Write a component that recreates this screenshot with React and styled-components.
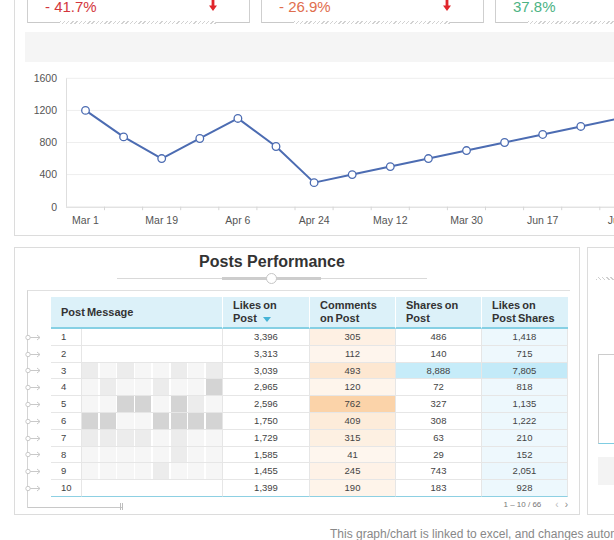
import React from 'react';
import styled, { createGlobalStyle } from 'styled-components';

const GlobalStyle = createGlobalStyle`
  html, body { margin: 0; padding: 0; overflow: hidden; background: #fff; }
  body { font-family: "Liberation Sans", Arial, sans-serif; color: #333; }
`;

const Page = styled.div`
  width: 720px;
  margin-top: -30px;
`;

/* ---------- top panel ---------- */
const TopPanel = styled.section`
  margin-left: 14px;
  border-left: 1px solid #dcdcdc;
  border-bottom: 1px solid #dcdcdc;
  border-right: 1px solid #dcdcdc;
`;

const CardsRow = styled.div`
  display: flex;
  gap: 11px;
  padding-left: 12px;
`;

const Card = styled.div`
  box-sizing: border-box;
  flex: 0 0 223px;
  height: 53px;
  border-left: 1px solid #cfcfcf;
  border-right: 1px solid #cfcfcf;
  display: flex;
  flex-direction: column;
  justify-content: flex-end;
`;

const ValueRow = styled.div`
  display: flex;
  align-items: center;
  justify-content: space-between;
  height: 18px;
  padding: 0 32px 0 17px;
  margin-bottom: 3px;
`;

const Value = styled.span`
  font-size: 15px;
  line-height: 18px;
  color: ${(p) => p.$color};
`;

const ArrowIcon = styled.svg`
  display: block;
  margin-bottom: 3px;
`;

const BottomRule = styled.div`
  display: flex;
  align-items: flex-end;
  height: 4px;
`;

const RuleSolid = styled.div`
  flex: 0 0 ${(p) => p.$w}px;
  height: 1px;
  background: #c9c9c9;
`;

const RuleHatch = styled.div`
  flex: 1;
  height: 3px;
  margin-bottom: -1px;
  background: repeating-linear-gradient(135deg, #d2d2d2 0 1px, transparent 1px 3px);
`;

const GreyBand = styled.div`
  margin: 9px 0 0 10px;
  height: 30px;
  background: #f5f5f5;
`;

const ChartSvg = styled.svg`
  display: block;
  text {
    font-family: "Liberation Sans", Arial, sans-serif;
    font-size: 10.5px;
    fill: #555;
  }
`;

/* ---------- lower row ---------- */
const LowerRow = styled.div`
  display: flex;
  gap: 7px;
  margin: 11px 0 0 14px;
`;

const PostsPanel = styled.section`
  box-sizing: border-box;
  flex: 0 0 566px;
  border: 1px solid #dcdcdc;
  padding: 4px 0 6px 0;
`;

const Title = styled.h2`
  margin: 0;
  padding-right: 50px;
  text-align: center;
  font-size: 16px;
  line-height: 20px;
  font-weight: bold;
  color: #333;
`;

const SliderBox = styled.div`
  height: 12px;
  display: flex;
  align-items: center;
  justify-content: center;
  padding-right: 50px;
`;

const Track = styled.div`
  position: relative;
  width: 310px;
  height: 1px;
  background: #d9d9d9;
`;

const Range = styled.div`
  position: absolute;
  left: 105px;
  top: -1px;
  width: 99px;
  height: 3px;
  background: #cdcdcd;
`;

const Handle = styled.div`
  position: absolute;
  left: 149px;
  top: -5px;
  box-sizing: border-box;
  width: 11px;
  height: 11px;
  border-radius: 50%;
  border: 1px solid #c6c6c6;
  background: #fff;
`;

const Frame = styled.div`
  box-sizing: border-box;
  width: 543px;
  margin: 6px 0 0 12px;
  border-top: 1px solid #e0e0e0;
  border-left: 1px solid #d4d4d4;
  padding: 6px 2px 0 0;
`;

const Table = styled.div`
  display: flex;
  flex-direction: column;
`;

const HeaderRow = styled.div`
  display: grid;
  grid-template-columns: 23px 172px 87px 86px 86px 86px;
  height: 32px;
`;

const HeadCell = styled.div`
  box-sizing: border-box;
  display: flex;
  align-items: center;
  padding-left: 10px;
  background: ${(p) => (p.$blank ? 'transparent' : '#dcf1f9')};
  border-bottom: ${(p) => (p.$blank ? 'none' : '2px solid #86d0e4')};
  border-right: ${(p) => (p.$blank || p.$last ? 'none' : '1px solid #fff')};
  font-size: 11px;
  line-height: 13px;
  font-weight: bold;
  word-spacing: -1px;
  color: #333;
`;

const SortArrow = styled.span`
  display: inline-block;
  margin-left: 6px;
  vertical-align: middle;
  border-left: 4px solid transparent;
  border-right: 4px solid transparent;
  border-top: 5px solid #45b3d6;
`;

const BodyRow = styled.div`
  display: grid;
  grid-template-columns: 23px 31px 141px 87px 86px 86px 86px;
  height: 16.8px;
`;

const IconCell = styled.div`
  display: flex;
  align-items: center;
  margin-left: -3px;
`;

const Cell = styled.div`
  box-sizing: border-box;
  border-bottom: 1px solid ${(p) => (p.$last ? '#8dd0e3' : '#e6e6e6')};
  border-right: 1px solid #e6e6e6;
  background: ${(p) => p.$bg || '#fff'};
  font-size: 9.5px;
  line-height: 15.8px;
  color: #444;
  text-align: ${(p) => (p.$left ? 'left' : 'center')};
  padding-left: ${(p) => (p.$left ? '10px' : '0')};
`;

const MsgCell = styled.div`
  box-sizing: border-box;
  border-bottom: 1px solid ${(p) => (p.$last ? '#8dd0e3' : '#e6e6e6')};
  border-right: 1px solid #e6e6e6;
  display: flex;
  gap: 1.6px;
`;

const shades = ['transparent', '#f6f6f6', '#ececec', '#d4d4d4'];

const Square = styled.div`
  flex: 1;
  background: ${(p) => shades[p.$level]};
`;

const TableFooter = styled.div`
  display: flex;
  align-items: flex-end;
  height: 11px;
`;

const ScrollStub = styled.div`
  box-sizing: border-box;
  width: 95px;
  height: 11px;
  border-bottom: 1px solid #c8c8c8;
  display: flex;
  justify-content: flex-end;
  align-items: flex-end;
`;

const Grip = styled.div`
  box-sizing: border-box;
  width: 3px;
  height: 7px;
  margin-bottom: -3px;
  border-left: 1px solid #bdbdbd;
  border-right: 1px solid #bdbdbd;
`;

const Pager = styled.div`
  margin-left: auto;
  display: flex;
  align-items: center;
  gap: 14px;
  font-size: 8px;
  line-height: 10px;
  color: #777;
  margin-bottom: -2px;
`;

const PagerArrows = styled.span`
  display: flex;
  gap: 6px;
  font-size: 10px;
  color: #bbb;
  & > span:last-child { color: #888; }
`;

const SidePanel = styled.section`
  box-sizing: border-box;
  flex: 0 0 80px;
  border: 1px solid #dcdcdc;
  padding: 29px 0 0 10px;
`;

const SideHatch = styled.div`
  margin-left: -2px;
  height: 3px;
  background: repeating-linear-gradient(45deg, #cfcfcf 0 1px, transparent 1px 3px);
`;

const SideBox = styled.div`
  margin-top: 74px;
  height: 90px;
  box-sizing: border-box;
  border: 1px solid #cccccc;
  border-bottom: 1px solid #7fcde2;
`;

const SideGrey = styled.div`
  margin-top: 13px;
  height: 28px;
  background: #f3f3f3;
`;

const Caption = styled.p`
  margin: 12px 0 0 330px;
  font-size: 12px;
  line-height: 14px;
  color: #888;
  white-space: nowrap;
`;

/* ---------- data ---------- */
const cards = [
  { value: '- 41.7%', color: '#d3363d', down: true },
  { value: '- 26.9%', color: '#df6e4e', down: true },
  { value: '37.8%', color: '#4cb384', down: false },
];

const series = [1200, 870, 600, 850, 1100, 750, 300, 400, 500, 600, 700, 800, 900, 1000, 1100];
const xLabels = ['Mar 1', 'Mar 19', 'Apr 6', 'Apr 24', 'May 12', 'Mar 30', 'Jun 17', 'Jul 5'];

const z = [0, 0, 0, 0, 0, 0, 0, 0];
const rows = [
  { n: 1, likes: 3396, comments: 305, shares: 486, ls: 1418, heat: z },
  { n: 2, likes: 3313, comments: 112, shares: 140, ls: 715, heat: z },
  { n: 3, likes: 3039, comments: 493, shares: 8888, ls: 7805, heat: [2, 1, 2, 1, 1, 2, 1, 2] },
  { n: 4, likes: 2965, comments: 120, shares: 72, ls: 818, heat: [1, 2, 1, 1, 2, 1, 1, 3] },
  { n: 5, likes: 2596, comments: 762, shares: 327, ls: 1135, heat: [1, 1, 3, 3, 1, 3, 2, 1] },
  { n: 6, likes: 1750, comments: 409, shares: 308, ls: 1222, heat: [3, 3, 1, 1, 3, 3, 3, 3] },
  { n: 7, likes: 1729, comments: 315, shares: 63, ls: 210, heat: [2, 2, 2, 2, 1, 2, 1, 1] },
  { n: 8, likes: 1585, comments: 41, shares: 29, ls: 152, heat: [1, 1, 1, 1, 1, 2, 1, 1] },
  { n: 9, likes: 1455, comments: 245, shares: 743, ls: 2051, heat: [1, 1, 1, 1, 2, 1, 1, 1] },
  { n: 10, likes: 1399, comments: 190, shares: 183, ls: 928, heat: z },
];

const fmt = (v) => v.toLocaleString('en-US');

const hex = (c) => [1, 3, 5].map((i) => parseInt(c.slice(i, i + 2), 16));
const mix = (a, b, t) => {
  const A = hex(a);
  const B = hex(b);
  return `rgb(${A.map((x, i) => Math.round(x + (B[i] - x) * t)).join(',')})`;
};
const heat = (v, max, from, to) => mix(from, to, Math.pow(v / max, 2));

/* ---------- pieces ---------- */
const DownArrow = () => (
  <ArrowIcon width="8" height="11" viewBox="0 0 8 11">
    <path d="M2.6 0h2.8v5.6H8L4 11 0 5.6h2.6z" fill="#e0262c" />
  </ArrowIcon>
);

const RowLink = () => (
  <svg width="17" height="7" viewBox="0 0 17 7">
    <circle cx="3" cy="3.5" r="2.2" fill="#fff" stroke="#c9c9c9" strokeWidth="1" />
    <line x1="5.2" y1="3.5" x2="15" y2="3.5" stroke="#c9c9c9" strokeWidth="1" />
    <polyline points="12,1 15,3.5 12,6" fill="none" stroke="#c9c9c9" strokeWidth="1" />
  </svg>
);

const OX = 15;
const OY = 62;
const xAt = (k) => 85.5 + 38.1 * k - OX;
const yAt = (v) => 206.7 - v * 0.08025 - OY;

const Chart = () => {
  const pts = series.map((v, k) => `${xAt(k)},${yAt(v)}`).join(' ');
  return (
    <ChartSvg width="700" height="173" viewBox="0 0 700 173">
      {[400, 800, 1200, 1600].map((v) => (
        <line key={v} x1={66 - OX} x2={700} y1={yAt(v)} y2={yAt(v)} stroke="#eeeeee" strokeWidth="1" />
      ))}
      <line x1={66.5 - OX} x2={66.5 - OX} y1={yAt(1600)} y2={yAt(0)} stroke="#dedede" />
      <line x1={66 - OX} x2={700} y1={yAt(0) + 0.5} y2={yAt(0) + 0.5} stroke="#d6d6d6" />
      {series.map((_, k) => (
        <line key={k} x1={xAt(k) + 19} x2={xAt(k) + 19} y1={yAt(0)} y2={yAt(0) + 3.5} stroke="#d6d6d6" />
      ))}
      {[0, 400, 800, 1200, 1600].map((v) => (
        <text key={v} x={57 - OX} y={yAt(v) + 3.8} textAnchor="end">
          {v}
        </text>
      ))}
      {xLabels.map((l, i) => (
        <text key={l} x={xAt(i * 2)} y={223.8 - OY} textAnchor="middle">
          {l}
        </text>
      ))}
      <polyline points={pts} fill="none" stroke="#4c6cb2" strokeWidth="2" strokeLinejoin="round" />
      {series.map((v, k) => (
        <circle key={k} cx={xAt(k)} cy={yAt(v)} r="3.8" fill="#fff" stroke="#4c6cb2" strokeWidth="1.3" />
      ))}
    </ChartSvg>
  );
};

export default function App() {
  return (
    <>
      <GlobalStyle />
      <Page>
        <TopPanel>
          <CardsRow>
            {cards.map((c) => (
              <Card key={c.value}>
                <ValueRow>
                  <Value $color={c.color}>{c.value}</Value>
                  {c.down && <DownArrow />}
                </ValueRow>
                <BottomRule>
                  <RuleSolid $w={32} />
                  <RuleHatch />
                  <RuleSolid $w={33} />
                </BottomRule>
              </Card>
            ))}
          </CardsRow>
          <GreyBand />
          <Chart />
        </TopPanel>

        <LowerRow>
          <PostsPanel>
            <Title>Posts Performance</Title>
            <SliderBox>
              <Track>
                <Range />
                <Handle />
              </Track>
            </SliderBox>
            <Frame>
              <Table>
                <HeaderRow>
                  <HeadCell $blank />
                  <HeadCell>Post Message</HeadCell>
                  <HeadCell>
                    <span>
                      Likes on
                      <br />
                      Post
                      <SortArrow />
                    </span>
                  </HeadCell>
                  <HeadCell>
                    <span>
                      Comments
                      <br />
                      on Post
                    </span>
                  </HeadCell>
                  <HeadCell>
                    <span>
                      Shares on
                      <br />
                      Post
                    </span>
                  </HeadCell>
                  <HeadCell $last>
                    <span>
                      Likes on
                      <br />
                      Post Shares
                    </span>
                  </HeadCell>
                </HeaderRow>
                {rows.map((r, i) => {
                  const last = i === rows.length - 1;
                  return (
                    <BodyRow key={r.n}>
                      <IconCell>
                        <RowLink />
                      </IconCell>
                      <Cell $left $last={last}>
                        {r.n}
                      </Cell>
                      <MsgCell $last={last}>
                        {r.heat.map((h, j) => (
                          <Square key={j} $level={h} />
                        ))}
                      </MsgCell>
                      <Cell $last={last}>{fmt(r.likes)}</Cell>
                      <Cell $last={last} $bg={heat(r.comments, 762, '#fef6ee', '#fbd3a9')}>
                        {fmt(r.comments)}
                      </Cell>
                      <Cell $last={last} $bg={heat(r.shares, 8888, '#ffffff', '#c6ecf9')}>
                        {fmt(r.shares)}
                      </Cell>
                      <Cell $last={last} $bg={heat(r.ls, 7805, '#eef8fd', '#c3eaf8')}>
                        {fmt(r.ls)}
                      </Cell>
                    </BodyRow>
                  );
                })}
              </Table>
              <TableFooter>
                <ScrollStub>
                  <Grip />
                </ScrollStub>
                <Pager>
                  <span>1 – 10 / 66</span>
                  <PagerArrows>
                    <span>‹</span>
                    <span>›</span>
                  </PagerArrows>
                </Pager>
              </TableFooter>
            </Frame>
          </PostsPanel>
          <SidePanel>
            <SideHatch />
            <SideBox />
            <SideGrey />
          </SidePanel>
        </LowerRow>

        <Caption>This graph/chart is linked to excel, and changes automatically when the data is updated.</Caption>
      </Page>
    </>
  );
}
